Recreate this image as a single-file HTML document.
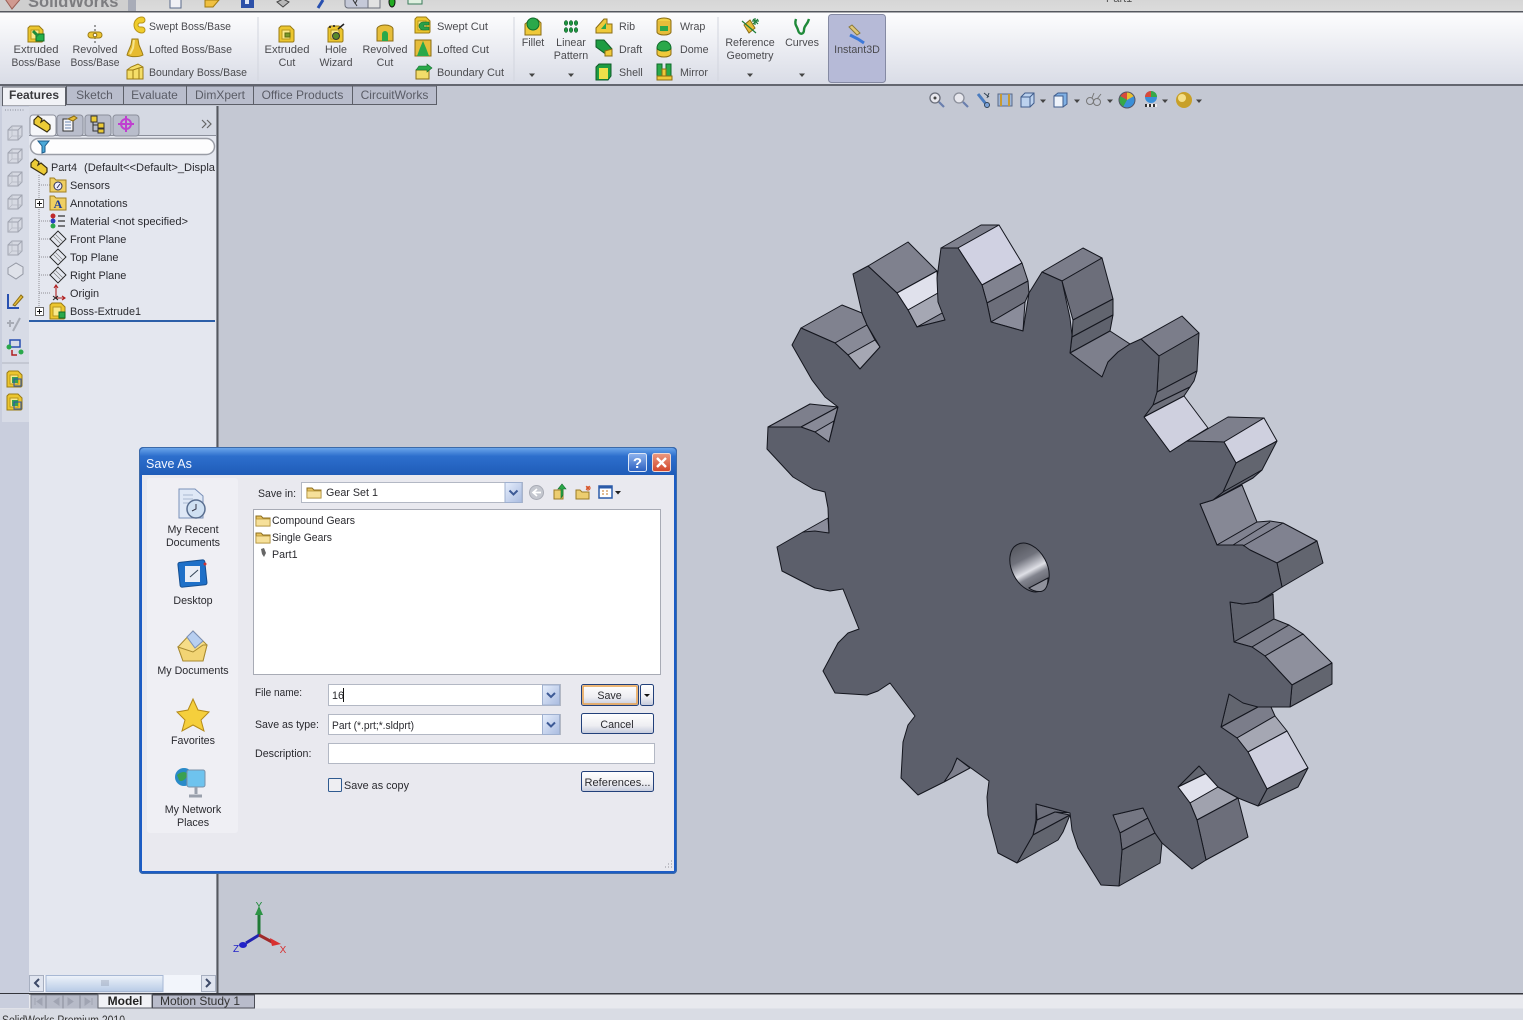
<!DOCTYPE html>
<html><head><meta charset="utf-8"><title>SolidWorks Save As</title>
<style>
html,body{margin:0;padding:0;background:#c4c8d3;overflow:hidden}
svg{display:block}
text{font-family:"Liberation Sans",Arial,sans-serif;font-size:10.7px;fill:#4b4b4f}
.m{text-anchor:middle}
.d{fill:#2a2a2f}
.t{font-size:10.9px}
.g polygon{stroke:#14161e;stroke-width:1;stroke-linejoin:round}
</style></head><body>
<svg width="1523" height="1020" viewBox="0 0 1523 1020" xmlns="http://www.w3.org/2000/svg">
<defs>
<linearGradient id="rib" x1="0" y1="0" x2="0" y2="1"><stop offset="0" stop-color="#fdfdfe"/><stop offset="1" stop-color="#d9dce6"/></linearGradient>
<linearGradient id="top" x1="0" y1="0" x2="0" y2="1"><stop offset="0" stop-color="#d6d6d6"/><stop offset="1" stop-color="#dcdcdc"/></linearGradient>
<linearGradient id="ttl" x1="0" y1="0" x2="0" y2="1"><stop offset="0" stop-color="#6aa5ea"/><stop offset=".3" stop-color="#2d6fcd"/><stop offset="1" stop-color="#1f5cb8"/></linearGradient>
<linearGradient id="btn" x1="0" y1="0" x2="0" y2="1"><stop offset="0" stop-color="#ffffff"/><stop offset=".6" stop-color="#eeeef2"/><stop offset="1" stop-color="#c4cadb"/></linearGradient>
<linearGradient id="dd" x1="0" y1="0" x2="1" y2="1"><stop offset="0" stop-color="#e6eefc"/><stop offset="1" stop-color="#a9bbe0"/></linearGradient>
<linearGradient id="hole" x1="0" y1="0" x2="0" y2="1"><stop offset="0" stop-color="#55575f"/><stop offset=".3" stop-color="#70727c"/><stop offset=".5" stop-color="#c4c5cd"/><stop offset=".56" stop-color="#dfe0e6"/><stop offset=".68" stop-color="#82848e"/><stop offset="1" stop-color="#4f515a"/></linearGradient>
<linearGradient id="thumb" x1="0" y1="0" x2="0" y2="1"><stop offset="0" stop-color="#eef3fa"/><stop offset="1" stop-color="#b8cbe6"/></linearGradient>
<linearGradient id="bl" x1="0" y1="0" x2="0" y2="1"><stop offset="0" stop-color="#8fb4ee"/><stop offset="1" stop-color="#2a5fc0"/></linearGradient>
<linearGradient id="rd" x1="0" y1="0" x2="0" y2="1"><stop offset="0" stop-color="#ec9a80"/><stop offset="1" stop-color="#d2452a"/></linearGradient>

<g id="ybox"><path d="M-8-6l2-2h9l4 4v11l-1 1h-14z" fill="#ecc62e" stroke="#9b7c14"/><path d="M-5-4h8v9h-8z" fill="#f9e98a" stroke="#b8961c"/></g>
<g id="ext"><use href="#ybox"/><path d="M0 0h8v7h-8z" fill="#25b04a" stroke="#0f6b2a"/><path d="M-3-3l5 5" stroke="#1d8c3c" stroke-width="3"/></g>
<g id="folder"><path d="M-7-4h5l2 2h7v8h-14z" fill="#e6c25e" stroke="#8e6f20"/><path d="M-7-1h14v7h-14z" fill="#f6e09a" stroke="#b08e33" stroke-width=".7"/></g>
<g id="plane"><path d="M-8 0L0-8L8 0L0 8Z" fill="none" stroke="#222" stroke-width=".9"/><path d="M-3-5L5 3M-5-3L3 5" stroke="#777" stroke-width=".6"/></g>
<g id="view"><path d="M-7-3h10v10h-10zM-7-3l4-4h10v10l-4 4M3-3l4-4" fill="#d6d9e2" stroke="#a0a4b0" stroke-width="1"/><path d="M-3-7v10h10M-7 7l4-4" fill="none" stroke="#b4b8c2" stroke-width=".7"/></g>
<g id="arr"><path d="M-3-1.500h6l-3 3.500z" fill="#444"/></g>
<g id="dbtn"><rect x="-8.500" y="-10" width="17" height="20" fill="url(#dd)" stroke="#9fb0cf"/><path d="M-4-2l4 4 4-4" fill="none" stroke="#3d5a96" stroke-width="2"/></g>
</defs>

<!-- base -->
<rect width="1523" height="1020" fill="#c4c8d3"/>
<rect width="1523" height="12" fill="url(#top)"/>
<rect y="11" width="1523" height="1.500" fill="#55585f"/>
<rect y="12.500" width="1523" height="72" fill="url(#rib)"/>
<rect y="84" width="1523" height="2" fill="#63666f"/>

<!-- top bar -->
<rect x="0" y="0" width="128" height="11" fill="#cfcfcf"/>
<rect x="128" y="0" width="8" height="11" fill="#a8acb8"/>
<path d="M3-4l9 13 11-13z" fill="#d09a90" stroke="#9a5f55"/>
<text x="28" y="7" style="font-size:16.500px;font-weight:bold;fill:#7d7d80">SolidWorks</text>
<path d="M170 0v8h11v-8" fill="#f0f0f5" stroke="#5a6a8a"/>
<path d="M205 0v7h8l6-7z" fill="#f0c040" stroke="#a07a10"/>
<path d="M241 0v8h13v-8z" fill="#2c50a8"/><rect x="245" y="0" width="4" height="4" fill="#dfe6f5"/>
<path d="M277 2l6-3 6 3-6 5z" fill="#b8b8b8" stroke="#444"/>
<path d="M318 8l5-8" stroke="#2850b0" stroke-width="3"/>
<rect x="345" y="-3" width="35" height="11" rx="3" fill="#c5c9d8" stroke="#6b6f7b"/><rect x="368" y="-3" width="12" height="11" fill="#e2e2e2" stroke="#6b6f7b"/>
<path d="M353 0l4 6M357 0l-2 4" stroke="#333"/>
<ellipse cx="392" cy="2" rx="3" ry="5" fill="#22aa22" stroke="#111"/>
<path d="M408 0v4h14v-4" fill="#dff0e0" stroke="#3a7a5a"/>
<text x="1106" y="2" style="fill:#555;font-size:11px">Part1</text>

<!-- ribbon separators -->
<path d="M258 17v64M514 17v64M718 17v64" stroke="#d2d5de"/>

<!-- ribbon icons -->
<use href="#ext" x="36" y="34"/>
<g transform="translate(95,34)"><path d="M0-9v18" stroke="#444" stroke-dasharray="2 2"/><path d="M-7 1a3 3 0 0 1 3-3h8a3 3 0 0 1 3 3 3 3 0 0 1-3 3h-8a3 3 0 0 1-3-3z" fill="#eec636" stroke="#9b7c14"/><circle cy="1" r="1.800" fill="#fff" stroke="#8b6d14"/></g>
<g transform="translate(135,25)"><path d="M7-8a8 8 0 1 0 0 16a3 3 0 0 0 0-6h-2a2 2 0 1 1 0-4h2a3 3 0 0 0 0-6z" fill="#f0cd2c" stroke="#b89418"/></g>
<g transform="translate(135,48)"><path d="M-3-9h6l1 6 3 7 1 3a9 3 0 0 1-16 0l1-3 3-7z" fill="#e6bb30" stroke="#9b7c14"/><path d="M-1-8l-1 8-3 6" stroke="#f7e58a" stroke-width="2" fill="none"/></g>
<g transform="translate(135,72)"><path d="M-8-2l4-3 7-3 5 3v12h-16z" fill="#f5de68" stroke="#9b7c14"/><path d="M-8-2h6l6-2 4-1M-2-2v9M4-4v11" fill="none" stroke="#9b7c14"/></g>
<g transform="translate(287,34)"><use href="#ybox"/><rect x="-2" y="-1" width="5" height="4" fill="#7a9a2a" stroke="#5a6a10"/></g>
<g transform="translate(336,34)"><use href="#ybox"/><circle cy="2" r="3.500" fill="#5a8a2a" stroke="#333"/><path d="M2-5l6-5M-6-8v2M-2-9v2" stroke="#222" stroke-width="1.600"/></g>
<g transform="translate(385,34)"><path d="M-8-5a8 4 0 0 1 16 0v12h-16z" fill="#e6bd3a" stroke="#8b6d14"/><path d="M-3 7v-7a3 3 0 0 1 6 0v7z" fill="#2aa84a"/></g>
<g transform="translate(423,25)"><use href="#ybox"/><path d="M6-3h-6a3 3 0 0 0 0 8h6v-3h-5v-2h5z" fill="#28a048" stroke="#0f6b2a" stroke-width=".6"/></g>
<g transform="translate(423,48)"><path d="M-8-8h16v16h-16z" fill="#e6bd3a" stroke="#8b6d14"/><path d="M0-7l3 7 3 8h-12l3-8z" fill="#2aa84a"/></g>
<g transform="translate(423,72)"><path d="M-7-2h13v9h-13z" fill="#f2dc6a" stroke="#8b6d14"/><path d="M-7-2l3-4h8v-2l5 4-5 4v-2z" fill="#2aa84a" stroke="#0f6b2a" stroke-width=".6"/></g>
<g transform="translate(533,27)"><path d="M-8-3l6-5h6l4 4v12h-16z" fill="#efc93a" stroke="#8b6d14"/><circle cy="-3" r="6" fill="#2aa84a" stroke="#0f6b2a"/></g>
<g transform="translate(571,27)" fill="#1e9440" stroke="#0f5b28" stroke-width=".6"><ellipse cx="-5" cy="-4" rx="1.700" ry="2.400"/><ellipse cy="-4" rx="1.700" ry="2.400"/><ellipse cx="5" cy="-4" rx="1.700" ry="2.400"/><ellipse cx="-5" cy="3" rx="1.700" ry="2.400"/><ellipse cy="3" rx="1.700" ry="2.400"/><ellipse cx="5" cy="3" rx="1.700" ry="2.400"/></g>
<g transform="translate(604,26)"><path d="M-8 7v-5l8-9h3v5h5v9z" fill="#efc93a" stroke="#8b6d14"/><path d="M-3 3l5-6v6z" fill="#2aa84a"/></g>
<g transform="translate(604,48)"><path d="M-8-8h8l8 9v7l-5-1-11-8z" fill="#1e9c42" stroke="#0f5b28"/><path d="M1 3l7-2v7h-7z" fill="#efc93a" stroke="#8b6d14"/></g>
<g transform="translate(604,72)"><path d="M-8-5l3-3h12v12l-3 4h-12z" fill="#1e9c42" stroke="#0f5b28"/><path d="M-5-4h9v11h-9z" fill="#efe04a"/></g>
<g transform="translate(664,26)"><ellipse cy="-5" rx="7" ry="3" fill="#f0d044" stroke="#8b6d14"/><path d="M-7-5v11a7 3 0 0 0 14 0v-11" fill="#e6bd3a" stroke="#8b6d14"/><rect x="-4" y="0" width="8" height="5" fill="#2aa84a"/></g>
<g transform="translate(664,48)"><path d="M-7 0v6a7 3 0 0 0 14 0v-6z" fill="#efc93a" stroke="#8b6d14"/><path d="M-7 0a7 7 0 0 1 14 0a7 3 0 0 1-14 0z" fill="#2aa84a" stroke="#0f6b2a"/></g>
<g transform="translate(664,72)"><path d="M-7-8h5v12h-5zM2-8h5v12h-5z" fill="#2aa84a" stroke="#0f6b2a"/><path d="M-7 4h15v4h-15zM-2-3h4v7h-4z" fill="#efc93a" stroke="#8b6d14"/></g>
<g transform="translate(750,27)"><path d="M-6-2l6-5 5 8-6 5z" fill="#e6bd3a" stroke="#8b6d14"/><path d="M-8-6l14 12M5-9v7M2-6h7M3-8l5 5M8-8l-5 5" stroke="#1e7c3a" stroke-width="1.200"/></g>
<g transform="translate(802,27)"><path d="M-6-8c-2 6 1 7 2 11 1 5 6 5 6 0 0-5 3-4 5-11" fill="none" stroke="#1f8a3a" stroke-width="2.400"/></g>
<use href="#arr" x="532" y="75"/><use href="#arr" x="571" y="75"/><use href="#arr" x="750" y="75"/><use href="#arr" x="802" y="75"/>

<rect x="828.500" y="14.500" width="57" height="68" rx="3" fill="#b6bad7" stroke="#858aa3"/>
<g transform="translate(857,34)"><path d="M-8-7l3-2 8 8-3 2z" fill="#e0c878" stroke="#8b7a3a"/><path d="M-7 1l8 4 6 4" stroke="#3d78d8" stroke-width="3" fill="none"/></g>

<!-- ribbon text -->
<text x="36" y="53" class="m" textLength="45" lengthAdjust="spacingAndGlyphs">Extruded</text><text x="36" y="66" class="m" textLength="49" lengthAdjust="spacingAndGlyphs">Boss/Base</text>
<text x="95" y="53" class="m" textLength="45" lengthAdjust="spacingAndGlyphs">Revolved</text><text x="95" y="66" class="m" textLength="49" lengthAdjust="spacingAndGlyphs">Boss/Base</text>
<text x="149" y="30" textLength="82" lengthAdjust="spacingAndGlyphs">Swept Boss/Base</text><text x="149" y="53" textLength="83" lengthAdjust="spacingAndGlyphs">Lofted Boss/Base</text><text x="149" y="76" textLength="98" lengthAdjust="spacingAndGlyphs">Boundary Boss/Base</text>
<text x="287" y="53" class="m" textLength="45" lengthAdjust="spacingAndGlyphs">Extruded</text><text x="287" y="66" class="m">Cut</text>
<text x="336" y="53" class="m">Hole</text><text x="336" y="66" class="m" textLength="33" lengthAdjust="spacingAndGlyphs">Wizard</text>
<text x="385" y="53" class="m" textLength="45" lengthAdjust="spacingAndGlyphs">Revolved</text><text x="385" y="66" class="m">Cut</text>
<text x="437" y="30" textLength="51" lengthAdjust="spacingAndGlyphs">Swept Cut</text><text x="437" y="53" textLength="52" lengthAdjust="spacingAndGlyphs">Lofted Cut</text><text x="437" y="76" textLength="67" lengthAdjust="spacingAndGlyphs">Boundary Cut</text>
<text x="533" y="46" class="m">Fillet</text>
<text x="571" y="46" class="m">Linear</text><text x="571" y="59" class="m">Pattern</text>
<text x="619" y="30">Rib</text><text x="619" y="53">Draft</text><text x="619" y="76">Shell</text>
<text x="680" y="30">Wrap</text><text x="680" y="53">Dome</text><text x="680" y="76">Mirror</text>
<text x="750" y="46" class="m">Reference</text><text x="750" y="59" class="m">Geometry</text>
<text x="802" y="46" class="m">Curves</text>
<text x="857" y="53" class="m">Instant3D</text>

<!-- command tabs -->
<g fill="#b9bdcc" stroke="#5c5f68">
<rect x="66.500" y="86" width="57" height="18.500"/><rect x="123.500" y="86" width="63" height="18.500"/><rect x="186.500" y="86" width="67" height="18.500"/><rect x="253.500" y="86" width="99" height="18.500"/><rect x="352.500" y="86" width="84" height="18.500"/>
</g>
<path d="M2.500 106V87h63v19z" fill="#f1f2f6" stroke="#5c5f68"/>
<text x="34" y="99" class="m d" style="font-weight:bold;font-size:12px;fill:#3a3a3e">Features</text>
<text x="94.500" y="99" class="m" style="font-size:12px;fill:#5a5c66">Sketch</text>
<text x="154.500" y="99" class="m" style="font-size:12px;fill:#5a5c66">Evaluate</text>
<text x="220" y="99" class="m" style="font-size:12px;fill:#5a5c66">DimXpert</text>
<text x="302.500" y="99" class="m" style="font-size:12px;fill:#5a5c66">Office Products</text>
<text x="394.500" y="99" class="m" style="font-size:12px;fill:#5a5c66">CircuitWorks</text>

<!-- view toolbar -->
<g transform="translate(936,100)"><circle cx="-1" cy="-2" r="5" fill="#e8e8ee" stroke="#6a6e7a" stroke-width="1.300"/><circle cx="-1" cy="-2" r="1.500" fill="#444"/><path d="M3 2l5 5" stroke="#6a7fae" stroke-width="2.200"/></g>
<g transform="translate(960,100)"><circle cx="-1" cy="-2" r="5" fill="#e8e8ee" stroke="#8a8e9a" stroke-width="1.300"/><path d="M3 2l5 5" stroke="#6a7fae" stroke-width="2.200"/></g>
<g transform="translate(983,100)"><path d="M-5-6l8 10" stroke="#4a7cc0" stroke-width="3"/><circle cx="4" cy="5" r="2.500" fill="#7ba2d8" stroke="#345"/><path d="M1-7l5 4M6-7l-2 5" stroke="#345"/></g>
<g transform="translate(1005,100)"><rect x="-7" y="-6" width="14" height="12" fill="#9fb6d8" stroke="#5a6a8a"/><path d="M-4-6v12M4-6v12" stroke="#c89a30" stroke-width="2"/></g>
<g transform="translate(1028,100)"><path d="M-7-3l4-4h9v10l-4 4h-9z" fill="#bcd2ee" stroke="#3f5c8c"/><path d="M-7-3h9v10M2-3l4-4" fill="none" stroke="#3f5c8c"/></g><use href="#arr" x="1043" y="101"/>
<g transform="translate(1061,100)"><path d="M-7-4l4-3h9v11l-4 3h-9z" fill="#7fb0e4" stroke="#3f5c8c"/><path d="M-7-4h9v11h-9z" fill="#eef3fa" stroke="#3f5c8c"/></g><use href="#arr" x="1077" y="101"/>
<g transform="translate(1094,100)" fill="none" stroke="#777"><circle cx="-4" cy="1" r="3.500"/><circle cx="3" cy="2" r="3.500"/><path d="M-2-2l2-5M3-1l4-5"/></g><use href="#arr" x="1110" y="101"/>
<g transform="translate(1127,100)"><circle r="8" fill="#3a8fd8"/><path d="M0 0V-8a8 8 0 0 0-7 4z" fill="#d84a3a"/><path d="M0 0V-8a8 8 0 0 1 7 4z" fill="#e8c030"/><path d="M0 0L-7-4a8 8 0 0 0 3 11z" fill="#38a848"/><circle r="8" fill="none" stroke="#556"/></g>
<g transform="translate(1151,99)"><circle cy="-2" r="6" fill="#3a8fd8"/><path d="M-6-2a6 6 0 0 1 6-6v6z" fill="#d84a3a"/><path d="M0-2v-6a6 6 0 0 1 6 6z" fill="#38a848"/><path d="M-6 5h12v3h-12z" fill="#333"/><path d="M-4 5h2v3h-2zM0 5h2v3h-2zM4 5h2v3h-2z" fill="#eee"/></g><use href="#arr" x="1165" y="101"/>
<circle cx="1184" cy="100" r="8" fill="#c8a028"/><circle cx="1182" cy="98" r="4" fill="#f4df88"/><use href="#arr" x="1199" y="101"/>

<!-- left strip -->
<rect x="0" y="106" width="29" height="888" fill="#c9cedd"/>
<rect x="2" y="107" width="27" height="315" fill="#d7dbe6"/>
<path d="M5 110h20" stroke="#8a8e9a" stroke-dasharray="1 1.500"/>
<use href="#view" x="15" y="133"/><use href="#view" x="15" y="156"/><use href="#view" x="15" y="179"/><use href="#view" x="15" y="202"/><use href="#view" x="15" y="225"/><use href="#view" x="15" y="248"/>
<path d="M8 268l8-5 7 4v7l-7 5-8-5z" fill="#dfe2ea" stroke="#9498a4"/>
<g transform="translate(15,301)"><path d="M-7-7v14h11" fill="none" stroke="#2850b0" stroke-width="2"/><path d="M-2 4l8-10 2 2-8 9z" fill="#e6bd3a" stroke="#8b6d14"/></g>
<g transform="translate(15,324)" stroke="#a8acb6" fill="none"><path d="M-8-1h7M-5-4v7M-2 7l7-13" stroke-width="2"/></g>
<g transform="translate(15,348)"><rect x="-5" y="-8" width="10" height="7" fill="none" stroke="#2850b0" stroke-width="1.500"/><circle cx="-6" cy="-1" r="2.500" fill="#2aa84a"/><circle cx="6" cy="4" r="2.500" fill="#2aa84a"/><path d="M-3 2v5h5" stroke="#b02020" stroke-width="1.500" fill="none"/></g>
<path d="M2 363h27" stroke="#b0b4c0"/>
<g transform="translate(15,379)"><use href="#ybox"/><rect x="-3" y="-2" width="6" height="6" fill="#3aa050"/><rect x="-1" y="0" width="7" height="7" fill="none" stroke="#2850b0"/></g>
<g transform="translate(15,402)"><use href="#ybox"/><rect x="-3" y="-2" width="6" height="6" fill="#3aa050"/><rect x="-1" y="0" width="7" height="7" fill="none" stroke="#2850b0"/></g>

<!-- feature manager panel -->
<rect x="29" y="106" width="187" height="888" fill="#e4e7ef"/>
<rect x="216.500" y="106" width="2" height="888" fill="#55585f"/>
<rect x="29" y="106" width="187" height="30" fill="#d5d9e3"/>
<path d="M29 135.500h187" stroke="#8b8f9b"/>
<rect x="30" y="115" width="26" height="21" rx="3" fill="#f5f6f9" stroke="#8b8f9b"/>
<rect x="57" y="115" width="26" height="21" rx="3" fill="#b9bdcb" stroke="#8b8f9b"/>
<rect x="85" y="115" width="26" height="21" rx="3" fill="#b9bdcb" stroke="#8b8f9b"/>
<rect x="113" y="115" width="26" height="21" rx="3" fill="#b9bdcb" stroke="#8b8f9b"/>
<g transform="translate(42,124)"><path d="M-8-4l4-4 4 3-1 3 3-2 6 5v4l-3 3-13-8z" fill="#eccb36" stroke="#3a3010" stroke-width="1.200"/></g>
<g transform="translate(69,124)"><rect x="-6" y="-5" width="10" height="12" fill="#f5f5fa" stroke="#333"/><path d="M-4-2h6M-4 1h6M-4 4h6" stroke="#6a86b0"/><path d="M-1-5l6-3 3 2-4 3z" fill="#e6bd3a" stroke="#8b6d14"/></g>
<g transform="translate(97,124)"><rect x="-6" y="-8" width="6" height="6" fill="#eccb36" stroke="#333"/><rect x="1" y="-1" width="6" height="5" fill="#eccb36" stroke="#333"/><rect x="1" y="5" width="6" height="4" fill="#eccb36" stroke="#333"/><path d="M-4-2v9h5M-4 1h5" stroke="#333" fill="none"/></g>
<g transform="translate(126,124)" fill="none" stroke="#c040d0" stroke-width="2"><circle r="5"/><path d="M0-8v16M-8 0h16"/></g>
<path d="M202 120l4 4-4 4M207 120l4 4-4 4" fill="none" stroke="#666" stroke-width="1.200"/>
<rect x="30.500" y="138.500" width="184" height="16" rx="8" fill="#fdfdfe" stroke="#9a9da6" stroke-width="1.500"/>
<path d="M38 141h11l-4 5v6l-3 1v-7z" fill="#4aa8d8" stroke="#1b5b8b"/>

<!-- tree -->
<path d="M39 175V311M39 185h11M39 221h11M39 239h11M39 257h11M39 275h11M39 293h11" stroke="#8f8f95" stroke-dasharray="1 1" fill="none"/>
<g transform="translate(39,167)"><path d="M-8-4l4-4 4 3-1 3 3-2 6 5v4l-3 3-13-8z" fill="#eccb36" stroke="#3a3010" stroke-width="1.200"/></g>
<g transform="translate(58,185)"><path d="M-8-7h4l2 2h10v12h-16z" fill="#efcf62" stroke="#a07f20"/><circle cy="1" r="4" fill="#eef" stroke="#335"/><path d="M-1 3l3-4" stroke="#335"/></g>
<g transform="translate(58,203)"><path d="M-8-7h4l2 2h10v12h-16z" fill="#efcf62" stroke="#a07f20"/><text x="0" y="5" class="m" style="font-family:'Liberation Serif',serif;font-weight:bold;font-size:12px;fill:#1b3b9b">A</text></g>
<g transform="translate(58,221)"><circle cx="-5" cy="-5" r="2.500" fill="#c02a2a"/><circle cx="-5" cy="0" r="2.500" fill="#2a40c0"/><circle cx="-5" cy="5" r="2.500" fill="#2aa84a"/><path d="M0-5h7M0 0h7M0 5h7" stroke="#333" stroke-width="1.300"/></g>
<use href="#plane" x="58" y="239"/><use href="#plane" x="58" y="257"/><use href="#plane" x="58" y="275"/>
<g transform="translate(56,293)"><path d="M0 5V-7M-2-5l2-3 2 3M0 5h8M6 3l3 2-3 2" fill="none" stroke="#b02020" stroke-width="1.100"/><path d="M-3 3l5 4M2 3l-5 4" stroke="#222"/></g>
<g transform="translate(58,311)"><use href="#ybox"/><path d="M1 1h6v6h-6z" fill="#2aa84a" stroke="#0f6b2a"/></g>
<g fill="#fff" stroke="#666"><rect x="35.500" y="199.500" width="8" height="8"/><rect x="35.500" y="307.500" width="8" height="8"/></g>
<path d="M37 203.500h5M39.500 201v5M37 311.500h5M39.500 309v5" stroke="#111"/>
<text x="51" y="171" class="d t">Part4</text>
<text x="84" y="171" class="d t" textLength="131" lengthAdjust="spacingAndGlyphs">(Default&lt;&lt;Default&gt;_Displa</text>
<text x="70" y="189" class="d t">Sensors</text>
<text x="70" y="207" class="d t">Annotations</text>
<text x="70" y="225" class="d t" textLength="118" lengthAdjust="spacingAndGlyphs">Material &lt;not specified&gt;</text>
<text x="70" y="243" class="d t">Front Plane</text>
<text x="70" y="261" class="d t">Top Plane</text>
<text x="70" y="279" class="d t">Right Plane</text>
<text x="70" y="297" class="d t">Origin</text>
<text x="70" y="315" class="d t" textLength="71" lengthAdjust="spacingAndGlyphs">Boss-Extrude1</text>
<rect x="29" y="320" width="186" height="2" fill="#2c5fa8"/>

<!-- panel scrollbar -->
<rect x="29" y="975" width="187" height="17" fill="#f2f5fb"/>
<rect x="29.500" y="975.500" width="14" height="16" fill="#dfe4ef" stroke="#a7afc0"/>
<rect x="201.500" y="975.500" width="14" height="16" fill="#dfe4ef" stroke="#a7afc0"/>
<rect x="46" y="975.500" width="117" height="16" fill="url(#thumb)" stroke="#a7b8d4"/>
<path d="M39 979l-4 4 4 4M206 979l4 4-4 4" fill="none" stroke="#3d4a68" stroke-width="2"/>
<path d="M102 980v6M104 980v6M106 980v6M108 980v6" stroke="#8a94a8" stroke-width=".7"/>

<!-- bottom tabs -->
<rect y="993" width="1523" height="27" fill="#e8e9ee"/>
<rect y="993" width="1523" height="1.500" fill="#33353b"/>
<rect x="0" y="994" width="29" height="14" fill="#c9cedd"/>
<rect x="31" y="995" width="67" height="14" fill="#b7bbc8" stroke="#8a8e9a"/>
<path d="M46 995v14M63 995v14M80 995v14" stroke="#8a8e9a"/>
<path d="M35 998v7M42 998l-5 3.500 5 3.500zM59 998l-5 3.500 5 3.500zM68 998l5 3.500-5 3.500zM85 998l5 3.500-5 3.500zM92 998v7" fill="#a0a4b2" stroke="#a0a4b2"/>
<rect x="98" y="994" width="54" height="14" fill="#f1f2f6" stroke="#5c5f68"/>
<rect x="152.500" y="995" width="102" height="13" fill="#b9bccb" stroke="#4b4d56"/>
<text x="125" y="1005" class="m" style="font-weight:bold;font-size:12px;fill:#222">Model</text>
<text x="200" y="1005" class="m" style="font-size:12px;fill:#333">Motion Study 1</text>
<rect y="1008.500" width="1523" height="11.500" fill="#d9dce4"/>
<text x="2" y="1024" style="font-size:11.500px;fill:#333" textLength="123" lengthAdjust="spacingAndGlyphs">SolidWorks Premium 2010</text>

<!-- triad -->
<path d="M259 935V913" stroke="#1f7a35" stroke-width="3"/><path d="M255 915l4-9 4 9z" fill="#2d9445"/>
<path d="M259 935L246 943" stroke="#2222b0" stroke-width="3"/><ellipse cx="243" cy="945" rx="4" ry="3" fill="#2222c8"/>
<path d="M259 935L272 942" stroke="#a02a2a" stroke-width="3"/><path d="M270 938l11 6-9 2z" fill="#d83030"/>
<text x="259" y="909" class="m" style="font-size:10px;fill:#1f8a3a">Y</text>
<text x="236" y="952" class="m" style="font-size:10px;fill:#2222c8">Z</text>
<text x="283" y="953" class="m" style="font-size:10px;fill:#d83030">X</text>

<!-- gear -->
<g class="g">
<polygon fill="#7d7f8c" points="768,427 810,404 838,407 801,427"/>
<polygon fill="#888a97" points="801,427 838,407 834,421 815,432"/>
<polygon fill="#9092a0" points="815,432 834,421 829,442"/>
<polygon fill="#80828f" points="801,328 842,305 862,313 867,325 835,343"/>
<polygon fill="#888a97" points="835,343 867,325 875,340 848,355"/>
<polygon fill="#a5a7b3" points="848,355 875,340 880,347 860,369"/>
<polygon fill="#7f818e" points="868,266 908,242 937,271 897,293"/>
<polygon fill="#e0e1ec" points="897,293 937,271 938,293 908,310"/>
<polygon fill="#a5a7b3" points="908,310 938,293 944,312 917,327"/>
<polygon fill="#7d7f8c" points="917,327 944,312 945,320"/>
<polygon fill="#7f818e" points="941,248 981,225 999,225 958,248"/>
<polygon fill="#d0d1e2" points="958,248 999,225 1022,263 982,285"/>
<polygon fill="#80828f" points="982,285 1022,263 1028,281 987,303"/>
<polygon fill="#6c6e7a" points="987,303 1028,281 1029,293 1025,302 991,322"/>
<polygon fill="#8a8c9a" points="991,322 1025,302 1023,331"/>
<polygon fill="#7b7d8a" points="1042,272 1083,248 1102,258 1062,281"/>
<polygon fill="#6c6e7a" points="1062,281 1102,258 1112,295 1113,299 1073,320"/>
<polygon fill="#62656f" points="1073,320 1113,299 1113,315 1072,337"/>
<polygon fill="#5f626d" points="1072,337 1113,315 1110,331 1070,353"/>
<polygon fill="#7d7f8c" points="1070,353 1110,331 1130,344 1118,352 1108,362 1102,377"/>
<polygon fill="#7b7d8a" points="1141,339 1182,316 1199,333 1159,356"/>
<polygon fill="#62656f" points="1159,356 1199,333 1197,371 1157,392"/>
<polygon fill="#696b76" points="1157,392 1197,371 1194,381 1190,387 1153,405"/>
<polygon fill="#6e707b" points="1153,405 1190,387 1184,396 1144,417"/>
<polygon fill="#cfd0df" points="1144,417 1184,396 1208,428 1187,441 1170,452"/>
<polygon fill="#7d7f8c" points="1187,441 1228,417 1264,418 1224,442"/>
<polygon fill="#cfd0df" points="1224,442 1264,418 1277,441 1236,463"/>
<polygon fill="#62656f" points="1236,463 1277,441 1262,470 1223,492"/>
<polygon fill="#5f626d" points="1223,492 1262,470 1253,478 1213,500"/>
<polygon fill="#868895" points="1200,504 1213,500 1242,485 1257,522 1217,545"/>
<polygon fill="#808290" points="1217,545 1257,522 1270,521 1283,523 1317,541 1277,563 1250,550"/>
<polygon fill="#62656f" points="1277,563 1317,541 1323,563 1282,587"/>
<polygon fill="#5f626d" points="1230,602 1243,604 1258,602 1273,594 1274,619 1234,642"/>
<polygon fill="#757783" points="1234,642 1274,619 1289,625 1252,647"/>
<polygon fill="#7f818e" points="1252,647 1289,625 1303,634 1265,656"/>
<polygon fill="#8e909d" points="1265,656 1303,634 1332,663 1292,685"/>
<polygon fill="#62656f" points="1292,685 1332,663 1332,684 1290,707"/>
<polygon fill="#62656f" points="1229,694 1258,707 1221,727"/>
<polygon fill="#7b7d8a" points="1221,727 1258,707 1271,707 1275,716 1237,738"/>
<polygon fill="#a5a7b3" points="1237,738 1275,716 1287,731 1248,752"/>
<polygon fill="#cfd0df" points="1248,752 1287,731 1308,768 1267,789"/>
<polygon fill="#62656f" points="1267,789 1308,768 1298,787 1258,806"/>
<polygon fill="#62656f" points="1178,787 1199,766 1207,773"/>
<polygon fill="#e0e1ec" points="1178,787 1207,773 1218,787 1190,803"/>
<polygon fill="#a0a2ae" points="1190,803 1218,787 1238,798 1197,820"/>
<polygon fill="#6c6e7a" points="1197,820 1238,798 1248,837 1206,860"/>
<polygon fill="#757783" points="1113,815 1143,808 1148,818 1120,833"/>
<polygon fill="#6a6c78" points="1120,833 1148,818 1155,833 1122,850"/>
<polygon fill="#62656f" points="1122,850 1155,833 1162,843 1160,863 1119,886"/>
<polygon fill="#6c6e7a" points="1036,804 1070,813 1055,812 1037,820"/>
<polygon fill="#6a6c78" points="1037,820 1055,812 1070,815 1033,835"/>
<polygon fill="#62656f" points="1033,835 1070,815 1063,832 1058,840 1017,863"/>
<polygon fill="#7d7f8c" points="957,758 970,768 944,782 952,770"/>
<polygon fill="#8a8c9a" points="803,532 828,518 829,533"/>
<polygon fill="#5c5f6b" points="768,427 767,449 793,477 813,489 825,492 828,508 829,533 815,531 803,532 777,547 782,571 815,588 830,591 843,589 859,629 848,633 838,643 823,671 835,693 867,695 878,691 890,683 915,716 908,725 903,742 901,778 918,795 944,782 952,770 957,758 989,781 987,797 988,815 998,853 1017,863 1033,835 1036,820 1036,804 1070,813 1072,830 1078,848 1101,885 1119,886 1122,850 1120,833 1113,815 1143,808 1155,833 1162,843 1192,869 1206,860 1197,820 1190,803 1178,787 1199,766 1218,787 1238,798 1258,806 1267,789 1248,752 1237,738 1221,727 1229,694 1243,703 1258,707 1290,707 1292,685 1265,656 1252,647 1234,642 1230,602 1243,604 1258,602 1282,587 1277,563 1250,550 1243,545 1233,545 1217,545 1200,504 1213,500 1223,492 1236,463 1224,442 1187,441 1170,452 1144,417 1153,405 1157,392 1159,356 1141,339 1130,344 1118,352 1108,362 1102,377 1070,353 1072,335 1070,318 1062,281 1042,272 1029,293 1023,331 991,322 987,303 982,285 958,248 941,248 937,278 938,302 945,320 917,327 908,310 897,293 868,266 853,274 862,313 867,325 880,347 860,369 848,355 835,343 801,328 792,345 812,380 825,397 838,407 829,442 815,432 801,427"/>
</g>
<ellipse cx="1029.500" cy="567.500" rx="17.500" ry="26" transform="rotate(-28 1029.500 567.500)" fill="url(#hole)" stroke="#14161e"/>
<path d="M1029 588L1048 578Q1048 590 1041 591.500Q1034 592 1029 588Z" fill="#8f919b" stroke="#14161e"/>
<path d="M1233 545l37-23M1243 546l40-23" stroke="#14161e" fill="none"/>

<!-- dialog -->
<rect x="139" y="447" width="538" height="427" rx="4" fill="#1c5cc4"/>
<rect x="139.500" y="447.500" width="537" height="426" rx="4" fill="none" stroke="#3c6aa8"/>
<path d="M140 475v-23a4 4 0 0 1 4-4h528a4 4 0 0 1 4 4v23z" fill="url(#ttl)"/>
<rect x="142" y="475" width="532" height="396" fill="#e9e9ef"/>
<rect x="147" y="478" width="91" height="355" rx="3" fill="#efeff4"/>
<text x="146" y="468" style="font-size:12.500px;fill:#f4f7ff">Save As</text>
<rect x="628.500" y="453.500" width="18" height="18" rx="2" fill="url(#bl)" stroke="#dce6f6"/>
<text x="637.500" y="468" class="m" style="font-size:15px;font-weight:bold;fill:#fff">?</text>
<rect x="652.500" y="453.500" width="18" height="18" rx="2" fill="url(#rd)" stroke="#f0d8d0"/>
<path d="M657 458l9 9M666 458l-9 9" stroke="#fff" stroke-width="2.400"/>

<!-- places -->
<g transform="translate(193,505)"><path d="M-14-16h16l8 7v22h-24z" fill="#dfe8f6" stroke="#7a90b8"/><path d="M-10-10h10M-10-6h10M-10-2h8" stroke="#a8b8d0"/><circle cx="3" cy="4" r="9" fill="#cfe0f2" stroke="#5a6f90" stroke-width="1.500"/><path d="M3-1v5l-4 2" stroke="#334" fill="none"/></g>
<g transform="translate(193,574)"><rect x="-14" y="-13" width="27" height="25" rx="2" fill="#1e70c8" stroke="#144e90" transform="rotate(-6)"/><rect x="-8" y="-8" width="15" height="16" fill="#e8edf6"/><path d="M-3 3l8-7" stroke="#345"/><circle cx="12" cy="-10" r="1.500" fill="#c33"/></g>
<g transform="translate(193,645)"><path d="M-15 2l15-16 14 14-4 16h-20z" fill="#f6dd88" stroke="#a88a30"/><path d="M-6-8l6-6 10 10-8 7z" fill="#b8cff0" stroke="#7a90b8"/><path d="M-15 2l15 5 10-7 4 0-4 16h-20z" fill="#f2d474" stroke="#a88a30"/></g>
<polygon points="193,699 198,710 209,712 201,720 204,731 193,725 182,731 185,720 177,712 188,710" fill="#f5cf3c" stroke="#b58a18"/>
<g transform="translate(193,785)"><circle cx="-9" cy="-8" r="9" fill="#2a8ac8"/><path d="M-16-10c4-4 10-4 10 0s-6 8-8 5z" fill="#3aa050"/><rect x="-6" y="-15" width="18" height="17" rx="2" fill="#6ec3ee" stroke="#7a90a8"/><path d="M3 2v7M-4 11h13" stroke="#9aa0ac" stroke-width="3"/></g>
<text x="193" y="533" class="m d">My Recent</text><text x="193" y="546" class="m d">Documents</text>
<text x="193" y="604" class="m d">Desktop</text>
<text x="193" y="674" class="m d">My Documents</text>
<text x="193" y="744" class="m d">Favorites</text>
<text x="193" y="813" class="m d">My Network</text><text x="193" y="826" class="m d">Places</text>

<!-- save in row -->
<text x="258" y="497" class="d" textLength="38" lengthAdjust="spacingAndGlyphs">Save in:</text>
<rect x="301.500" y="482.500" width="221" height="20" fill="#fff" stroke="#b3b8c4"/>
<use href="#folder" x="314" y="492"/>
<text x="326" y="496" class="d" textLength="52" lengthAdjust="spacing">Gear Set 1</text>
<use href="#dbtn" x="513.500" y="492.500"/>
<circle cx="536.500" cy="492.500" r="7" fill="#c4c7cf" stroke="#a8abb5"/><path d="M541 492.500h-7M537 489l-4 3.500 4 3.500" stroke="#fff" stroke-width="1.700" fill="none"/>
<g transform="translate(560,492)"><path d="M-6-2h9v9h-9z" fill="#eccd70" stroke="#9a7a26"/><path d="M1 6v-9h-3l4-5 4 5h-3v6z" fill="#2aa84a" stroke="#0f6b2a" stroke-width=".6"/></g>
<g transform="translate(583,493)"><path d="M-7-3h4l2 2h7v7h-13z" fill="#eccd70" stroke="#9a7a26"/><path d="M5-7v5M3-5h5M3-7l4 4M7-7l-4 4" stroke="#d8552a"/></g>
<g transform="translate(606,492)"><rect x="-7" y="-6" width="13" height="12" fill="#fff" stroke="#2a5aa8" stroke-width="1.500"/><rect x="-7" y="-6" width="13" height="2.500" fill="#2a5aa8"/><path d="M-4-1h2M0-1h2M-4 2h2M0 2h2" stroke="#c47a2a"/></g>
<path d="M615 491h6l-3 3.500z" fill="#222"/>

<!-- file list -->
<rect x="253.500" y="509.500" width="407" height="165" fill="#fff" stroke="#a8abb5"/>
<use href="#folder" x="263" y="520"/><use href="#folder" x="263" y="537"/>
<path d="M261 549l3-1 2 5-2 4-2-3z" fill="#666"/>
<text x="272" y="524" class="d" textLength="83" lengthAdjust="spacingAndGlyphs">Compound Gears</text>
<text x="272" y="541" class="d" textLength="60" lengthAdjust="spacingAndGlyphs">Single Gears</text>
<text x="272" y="558" class="d">Part1</text>

<!-- fields -->
<text x="255" y="696" class="d" textLength="47" lengthAdjust="spacingAndGlyphs">File name:</text>
<text x="255" y="728" class="d" textLength="64" lengthAdjust="spacingAndGlyphs">Save as type:</text>
<text x="255" y="757" class="d">Description:</text>
<rect x="328.500" y="684.500" width="232" height="21" fill="#fff" stroke="#b3b8c4"/>
<use href="#dbtn" x="551" y="695"/>
<text x="332" y="699" class="d">16</text><path d="M343.500 688v14" stroke="#111"/>
<rect x="328.500" y="714.500" width="232" height="20" fill="#fff" stroke="#b3b8c4"/>
<use href="#dbtn" x="551" y="724.500"/>
<text x="332" y="729" class="d" textLength="82" lengthAdjust="spacingAndGlyphs">Part (*.prt;*.sldprt)</text>
<rect x="328.500" y="743.500" width="326" height="20" fill="#fff" stroke="#b3b8c4"/>
<rect x="328.500" y="778.500" width="13" height="13" rx="1" fill="#eeeef2" stroke="#2f5a90"/>
<text x="344" y="789" class="d" textLength="65" lengthAdjust="spacingAndGlyphs">Save as copy</text>

<!-- buttons -->
<rect x="581.500" y="684.500" width="57" height="21" rx="2" fill="url(#btn)" stroke="#22407a"/>
<rect x="583" y="686" width="54" height="18" rx="1" fill="none" stroke="#e8a04a" stroke-width="1.500"/>
<rect x="640.500" y="684.500" width="13" height="21" rx="2" fill="url(#btn)" stroke="#22407a"/>
<path d="M644 694h6l-3 3z" fill="#111"/>
<rect x="581.500" y="713.500" width="72" height="20" rx="2" fill="url(#btn)" stroke="#22407a"/>
<rect x="581.500" y="771.500" width="72" height="20" rx="2" fill="url(#btn)" stroke="#22407a"/>
<text x="609.500" y="699" class="m d">Save</text>
<text x="617" y="728" class="m d">Cancel</text>
<text x="617.500" y="786" class="m d" textLength="66" lengthAdjust="spacingAndGlyphs">References...</text>
<path d="M671 861h1M668 864h1M671 864h1M665 867h1M668 867h1M671 867h1" stroke="#bdbdc4" stroke-width="2"/>
</svg>
</body></html>
